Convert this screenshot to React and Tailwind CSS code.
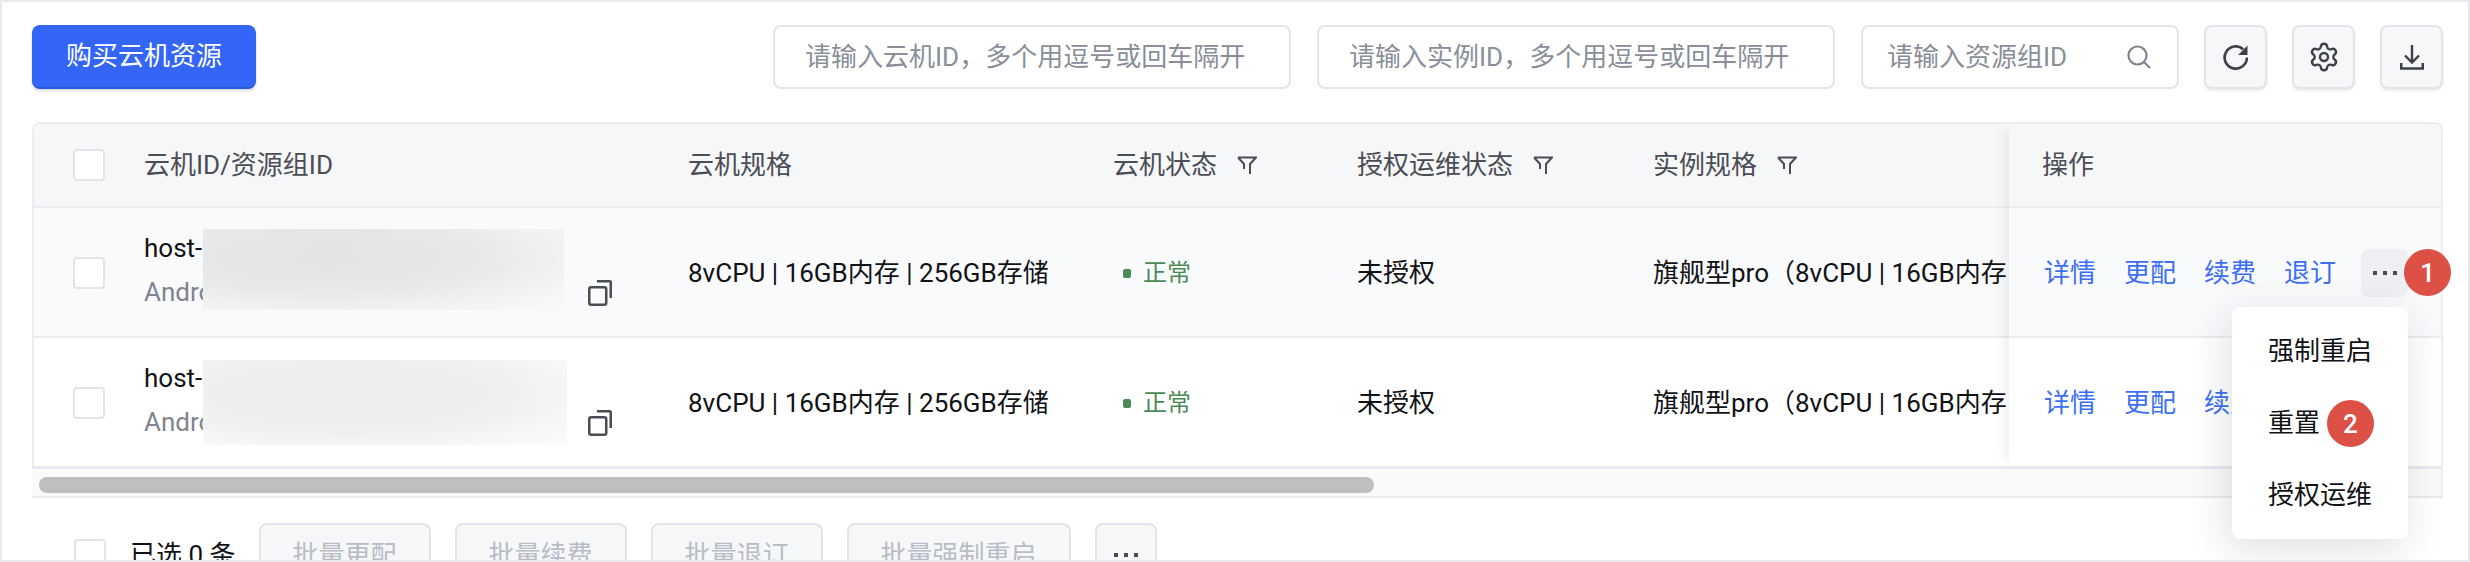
import React from "react";
import { Settings } from "lucide-react";

const Check = () => <span className="block w-[32px] h-[32px] shrink-0 rounded-[4px] border-2 border-[#e2e4ea] bg-white" />;

const Filter = () => (
  <svg width="20" height="18" viewBox="0 0 20 18" fill="none" stroke="#4b4d55" strokeWidth="2" className="shrink-0">
    <path d="M1 1.5h18l-6 6.5v10M1 1.5l6 6.5v5" />
  </svg>
);

const Copy = () => (
  <svg width="24" height="26" viewBox="0 0 24 26" fill="none" stroke="#4b4d55" strokeWidth="2.5" className="shrink-0 mt-[40px]">
    <rect x="1.25" y="7.25" width="17" height="17.5" rx="2" />
    <path d="M9 1.25h12.5a1.25 1.25 0 0 1 1.25 1.25V18" />
  </svg>
);

const Dots = () => (
  <span className="flex gap-[6px]">
    <i className="block w-[4px] h-[4px] bg-[#4b4d55]" />
    <i className="block w-[4px] h-[4px] bg-[#4b4d55]" />
    <i className="block w-[4px] h-[4px] bg-[#4b4d55]" />
  </span>
);

const Badge = ({ n, className }) => (
  <span className={"absolute w-[47px] h-[47px] rounded-full bg-[#dc5046] text-white text-[26px] font-medium flex items-center justify-center " + className}>{n}</span>
);

const Field = ({ w, text, children }) => (
  <div className={"h-[64px] rounded-[8px] border-2 border-[#e2e4ea] bg-white pr-[26px] flex items-center justify-between " + w}>
    <span className="text-[#8a8e99] whitespace-nowrap">{text}</span>
    {children}
  </div>
);

const IconBtn = ({ children }) => (
  <button className="w-[63px] h-[64px] rounded-[8px] border-2 border-[#e2e4ea] bg-[#f6f7f9] shadow-[0_2px_3px_rgba(0,0,0,0.08)] flex items-center justify-center text-[#3f4149]">
    {children}
  </button>
);

const Bulk = ({ children }) => (
  <button className="h-[64px] px-[32px] rounded-[8px] border-2 border-[#e2e4ea] bg-[#f6f7f9] text-[#b9bcc5] whitespace-nowrap">{children}</button>
);

const cols = "grid grid-cols-[110px_544px_425px_244px_296px_700px] items-center";

const Head = ({ children, filter }) => (
  <div className="flex items-center gap-[20px] text-[#4b4d55] whitespace-nowrap">
    <span>{children}</span>
    {filter && <Filter />}
  </div>
);

const rows = [
  {
    bg: "bg-[#f9fafc]",
    h: "h-[130px] pt-[2px] border-b-2 border-[#ecedf1]",
    patch: "top-[3px] w-[361px] h-[81px] bg-[radial-gradient(ellipse_at_35%_35%,#e2e3e4_0%,#e7e8e9_45%,#f1f2f3_72%,#f7f8f9_92%)]",
    more: true,
  },
  {
    bg: "bg-white",
    h: "h-[128px] pt-[2px]",
    patch: "top-[4px] w-[364px] h-[85px] bg-[radial-gradient(ellipse_at_40%_40%,#ebecec_0%,#eeefef_50%,#f5f6f6_75%,#fafafa_92%)]",
    more: false,
  },
];

export default function App() {
  return (
    <div className="box-border w-[2470px] h-[562px] overflow-hidden border-2 border-[#e8e9ed] bg-white pt-[23px] pl-[30px] pr-[25px] text-[26px] leading-[40px] text-[#111215] font-['Roboto','Noto_Sans_CJK_SC',sans-serif]">
      <div className="flex items-center h-[64px]">
        <button className="w-[224px] h-[64px] rounded-[8px] bg-[#3366f6] border-b-2 border-[#2c59d9] shadow-[0_2px_3px_rgba(0,0,0,0.15)] text-white">购买云机资源</button>
        <div className="ml-auto flex items-center gap-[25px]">
          <div className="flex gap-[26px]">
            <Field w="w-[518px] pl-[30px]" text="请输入云机ID，多个用逗号或回车隔开" />
            <Field w="w-[518px] pl-[30px]" text="请输入实例ID，多个用逗号或回车隔开" />
            <Field w="w-[318px] pl-[24px]" text="请输入资源组ID">
              <svg width="24" height="24" viewBox="0 0 24 24" fill="none" stroke="#80848f" strokeWidth="2.2" className="shrink-0">
                <circle cx="10.5" cy="10.5" r="9" />
                <path d="M17 17l6 6" />
              </svg>
            </Field>
          </div>
          <IconBtn>
            <svg width="25" height="25" viewBox="0 0 24 24" fill="none">
              <path d="M23 12a10.7 10.7 0 1 1-3.6-8" stroke="currentColor" strokeWidth="2.6" />
              <path d="M23.5 0.5v9h-9z" fill="currentColor" />
            </svg>
          </IconBtn>
          <IconBtn><Settings size={32} strokeWidth={1.8} /></IconBtn>
          <IconBtn>
            <svg width="24" height="25" viewBox="0 0 24 25" fill="none" stroke="currentColor" strokeWidth="2.4">
              <path d="M12 0v17M5 10.5l7 7 7-7" />
              <path d="M1.2 18v5.5h21.6V18" strokeWidth="2.6" />
            </svg>
          </IconBtn>
        </div>
      </div>

      <div className="relative mt-[33px] rounded-t-[8px] border-t-2 border-r-2 border-[#ecedf1]">
        <div className="flex">
          <div className="flex-1 min-w-0 overflow-hidden rounded-tl-[8px] border-l-2 border-[#ecedf1]">
            <div className={cols + " h-[84px] w-[2320px] bg-[#f6f7f9] border-b-2 border-[#ecedf1]"}>
              <div className="pl-[39px]"><Check /></div>
              <Head>云机ID/资源组ID</Head>
              <Head>云机规格</Head>
              <Head filter>云机状态</Head>
              <Head filter>授权运维状态</Head>
              <Head filter>实例规格</Head>
            </div>
            {rows.map((r, i) => (
              <div key={i} className={cols + " w-[2320px] " + r.bg + " " + r.h}>
                <div className="pl-[39px]"><Check /></div>
                <div className="flex items-center">
                  <div className="relative w-[444px] leading-[44px] -translate-y-[3px]">
                    <div>host-</div>
                    <div className="text-[#80848f]">Android</div>
                    <div className={"absolute left-[59px] " + r.patch} />
                  </div>
                  <Copy />
                </div>
                <div className="whitespace-nowrap">8vCPU | 16GB内存 | 256GB存储</div>
                <div className="flex items-center gap-[12px] pl-[10px] text-[24px] text-[#4a8a55]">
                  <i className="block w-[8px] h-[9px] rounded-[2px] bg-[#4a8a55]" />
                  <span>正常</span>
                </div>
                <div>未授权</div>
                <div className="whitespace-nowrap">旗舰型pro（8vCPU | 16GB内存 | 256GB存储）</div>
              </div>
            ))}
          </div>

          <div className="relative w-[432px] shrink-0 shadow-[-10px_0_12px_-6px_rgba(0,0,0,0.07)]">
            <div className="h-[84px] pl-[33px] flex items-center rounded-tr-[8px] bg-[#f6f7f9] border-b-2 border-[#ecedf1] text-[#4b4d55]">操作</div>
            {rows.map((r, i) => (
              <div key={i} className={"pl-[35px] flex items-center gap-[28px] text-[#3d6ff5] " + r.bg + " " + r.h}>
                <span>详情</span>
                <span>更配</span>
                <span>续费</span>
                <span>退订</span>
                {r.more && (
                  <span className="relative -ml-[3px] w-[47px] h-[48px] rounded-[8px] bg-[#eeeff2] flex items-center justify-center">
                    <Dots />
                    <Badge n="1" className="left-[43px] top-0" />
                  </span>
                )}
              </div>
            ))}
          </div>
        </div>

        <div className="box-border h-[32px] pl-[7px] pt-[8px] bg-[#fafafa] border-t-[3px] border-b-2 border-[#e9eaee]">
          <div className="w-[1335px] h-[16px] rounded-full bg-[#bfbfbf]" />
        </div>

        <div className="absolute left-[2200px] top-[183px] w-[176px] h-[232px] py-[8px] rounded-[8px] bg-white shadow-[-4px_10px_40px_rgba(30,35,60,0.14)]">
          <div className="h-[72px] pl-[36px] flex items-center">强制重启</div>
          <div className="relative h-[72px] pl-[36px] flex items-center">
            重置
            <Badge n="2" className="left-[95px] top-[13px]" />
          </div>
          <div className="h-[72px] pl-[36px] flex items-center">授权运维</div>
        </div>
      </div>

      <div className="mt-[25px] pl-[42px] flex items-center gap-[24px]">
        <Check />
        <span className="whitespace-nowrap -mr-[1px]">已选 0 条</span>
        <Bulk>批量更配</Bulk>
        <Bulk>批量续费</Bulk>
        <Bulk>批量退订</Bulk>
        <Bulk>批量强制重启</Bulk>
        <button className="w-[62px] h-[64px] rounded-[8px] border-2 border-[#e2e4ea] bg-[#f6f7f9] flex items-center justify-center"><Dots /></button>
      </div>
    </div>
  );
}
